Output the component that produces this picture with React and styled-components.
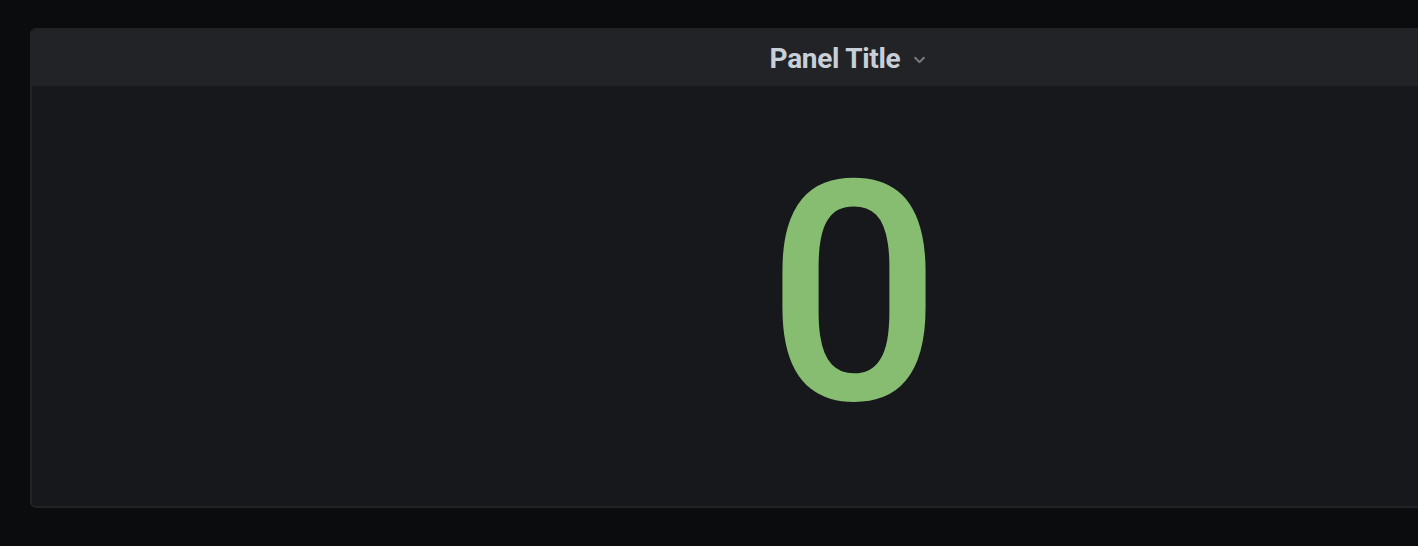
import React from "react";
import styled, { createGlobalStyle } from "styled-components";

const GlobalStyle = createGlobalStyle`
  html, body {
    margin: 0;
    padding: 0;
    background: #0b0c0e;
    overflow: hidden;
    font-family: Roboto, "Liberation Sans", sans-serif;
  }
`;

const Page = styled.div`
  width: 1418px;
  height: 546px;
  padding: 28px 0 0 30px;
  box-sizing: border-box;
  overflow: hidden;
`;

const Panel = styled.section`
  width: 1644px;
  height: 480px;
  box-sizing: border-box;
  display: flex;
  flex-direction: column;
  background: #17181c;
  border: 2px solid #222327;
  border-radius: 6px;
  overflow: hidden;
`;

const Header = styled.header`
  height: 56px;
  flex: none;
  display: flex;
  align-items: center;
  justify-content: center;
  gap: 9px;
  background: #222327;
  padding-right: 4px;
  box-sizing: border-box;
`;

const Title = styled.h2`
  margin: 0;
  font-size: 28px;
  font-weight: 700;
  color: #c7d0d9;
  letter-spacing: -0.3px;
`;

const Chevron = styled.svg`
  width: 21px;
  height: 21px;
  margin-top: 3px;
  color: #7b7c82;
`;

const Body = styled.div`
  flex: 1;
  display: flex;
  align-items: center;
  justify-content: center;
`;

const Value = styled.span`
  font-size: 307px;
  line-height: 1;
  font-weight: 500;
  color: #86bd70;
  margin-top: -3px;
  margin-left: 4px;
`;

const App = () => (
  <>
    <GlobalStyle />
    <Page>
      <Panel>
        <Header>
          <Title>Panel Title</Title>
          <Chevron viewBox="0 0 24 24" fill="none" stroke="currentColor" strokeWidth="2.2" strokeLinecap="round" strokeLinejoin="round">
            <path d="M7 10l5 5 5-5" />
          </Chevron>
        </Header>
        <Body>
          <Value>0</Value>
        </Body>
      </Panel>
    </Page>
  </>
);

export default App;
